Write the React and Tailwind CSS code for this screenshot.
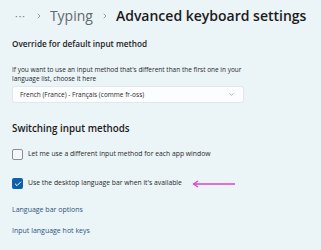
import { Check, ChevronDown, ChevronRight } from "lucide-react";

const font = { fontFamily: '"Open Sans", "Noto Sans", sans-serif' };

function Checkbox({ checked }) {
  if (checked) {
    return (
      <div className="w-[11px] h-[11px] rounded-[2px] bg-[#0f5fac] flex items-center justify-center shrink-0">
        <Check className="w-[8px] h-[8px] text-white" strokeWidth={3} />
      </div>
    );
  }
  return (
    <div className="w-[11px] h-[11px] rounded-[2px] border border-[#8a8f94] bg-[#f4f8fa] shrink-0" />
  );
}

export default function App() {
  return (
    <div
      className="w-[321px] h-[250px] bg-[#ebf4f7] text-[#1b1b1b] overflow-hidden"
      style={font}
    >
      {/* Breadcrumb */}
      <div className="pt-[6px] pl-[15px] h-[26px] flex items-center text-[14px] leading-[20px]">
        <span className="text-[#6d7275] text-[10px] tracking-[1px]">···</span>
        <ChevronRight className="w-[8px] h-[8px] text-[#6d7275] ml-[9px] mr-[7px]" strokeWidth={2} />
        <span className="text-[#64696d]">Typing</span>
        <ChevronRight className="w-[8px] h-[8px] text-[#6d7275] ml-[8px] mr-[7px]" strokeWidth={2} />
        <span className="font-semibold text-[#1b1b1b]">Advanced keyboard settings</span>
      </div>

      <div className="px-[12px]">
        <div className="mt-[12px] text-[8.2px] leading-[12px] font-semibold">
          Override for default input method
        </div>

        <div className="mt-[16px] text-[6.5px] leading-[8.5px] text-[#2a2a2a] w-[240px]">
          If you want to use an input method that's different than the first one in
          your language list, choose it here
        </div>

        <div className="mt-[3px] w-[232px] h-[17px] bg-[#fcfdfe] border border-[#e1e7ea] rounded-[3px] flex items-center justify-between pl-[7px] pr-[8px] text-[6.5px] text-[#2a2a2a]">
          <span>French (France) - Français (comme fr-oss)</span>
          <ChevronDown className="w-[7px] h-[7px] text-[#777]" strokeWidth={2} />
        </div>

        <div className="mt-[20px] text-[9.8px] leading-[12px] font-semibold">
          Switching input methods
        </div>

        <div className="mt-[14px] flex items-center gap-[5px] text-[6.8px] text-[#2a2a2a]">
          <Checkbox />
          <span>Let me use a different input method for each app window</span>
        </div>

        <div className="mt-[18px] flex items-center gap-[5px] text-[6.8px] text-[#2a2a2a]">
          <Checkbox checked />
          <span>Use the desktop language bar when it's available</span>
          <svg width="44" height="8" viewBox="0 0 44 8" className="ml-[5px]">
            <path d="M2 4 L43 4" stroke="#d843cf" strokeWidth="1.3" />
            <path d="M6 1 L1.5 4 L6 7" stroke="#d843cf" strokeWidth="1.3" fill="none" />
          </svg>
        </div>

        <div className="mt-[16px] text-[7px] leading-[10px] text-[#2d557f]">
          Language bar options
        </div>
        <div className="mt-[11px] text-[7px] leading-[10px] text-[#2d557f]">
          Input language hot keys
        </div>
      </div>
    </div>
  );
}
